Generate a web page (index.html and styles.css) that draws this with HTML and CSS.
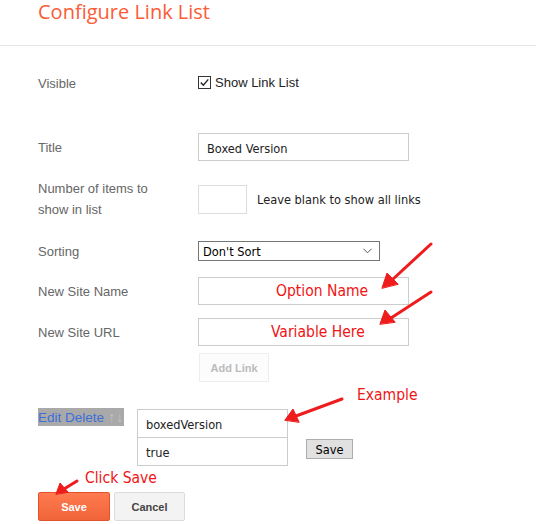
FILE: index.html
```
<!DOCTYPE html>
<html>
<head>
<meta charset="utf-8">
<link rel="stylesheet" href="styles.css">
</head>
<body>
<div class="page">
  <header class="head"><h2 class="title">Configure Link List</h2></header>
  <div class="form">
    <div class="row r-visible">
      <div class="label">Visible</div>
      <div class="field">
        <span class="check"><svg width="13" height="13" viewBox="0 0 13 13"><rect x="0.5" y="0.5" width="12" height="12" fill="#fff" stroke="#333"/><path d="M2.8 6.6 L5.3 9.2 L10.3 3.4" fill="none" stroke="#222" stroke-width="1.4"/></svg></span>
        <span class="check-label">Show Link List</span>
      </div>
    </div>
    <div class="row r-title">
      <div class="label">Title</div>
      <div class="field"><div class="input wide">Boxed Version</div></div>
    </div>
    <div class="row r-number">
      <div class="label">Number of items to<br>show in list</div>
      <div class="field"><div class="input small"></div><span class="hint">Leave blank to show all links</span></div>
    </div>
    <div class="row r-sort">
      <div class="label">Sorting</div>
      <div class="field"><div class="select"><span>Don't Sort</span><svg width="9" height="6" viewBox="0 0 9 6"><path d="M0.5 0.8 L4.5 4.8 L8.5 0.8" fill="none" stroke="#555" stroke-width="1"/></svg></div></div>
    </div>
    <div class="row r-name">
      <div class="label">New Site Name</div>
      <div class="field"><div class="input wide note-box"><span class="note note-name">Option Name</span></div></div>
    </div>
    <div class="row r-url">
      <div class="label">New Site URL</div>
      <div class="field"><div class="input wide note-box"><span class="note note-url">Variable Here</span></div></div>
    </div>
    <div class="row r-add">
      <div class="label"></div>
      <div class="field"><div class="btn-add">Add Link</div></div>
    </div>
    <div class="r-edit">
      <div class="links"><span class="lnk">Edit</span> <span class="lnk">Delete</span> <span class="arr">↑</span><span class="arr">↓</span></div>
      <div class="pair">
        <div class="input pin">boxedVersion</div>
        <div class="input pin pin2">true</div>
      </div>
      <div class="btn-small">Save</div>
    </div>
    <div class="r-buttons">
      <div class="btn-save">Save</div>
      <div class="btn-cancel">Cancel</div>
    </div>
  </div>
  <span class="note note-example">Example</span>
  <span class="note note-click">Click Save</span>
  <svg class="arrows" width="536" height="524" viewBox="0 0 536 524">
    <g stroke="#ee1c1c" stroke-width="3" stroke-linecap="round" fill="#ee1c1c">
      <line x1="431" y1="244" x2="392" y2="280"/>
      <polygon points="382,288 387,273 398,284" stroke-width="1"/>
      <line x1="431" y1="292" x2="391" y2="318"/>
      <polygon points="380,324 385,310 395,322" stroke-width="1"/>
      <line x1="342" y1="399" x2="296" y2="416"/>
      <polygon points="285,420 293,409 299,422" stroke-width="1"/>
      <line x1="77" y1="481" x2="64" y2="489"/>
      <polygon points="56,494 60,483 68,492" stroke-width="1"/>
    </g>
  </svg>
</div>
</body>
</html>
```
FILE: styles.css
```
html, body { margin: 0; padding: 0; background: #fff; }
.page { position: relative; width: 536px; height: 524px; overflow: hidden; font-family: "Liberation Sans", Arial, sans-serif; }
.head { box-sizing: border-box; height: 46px; border-bottom: 1px solid #e5e5e5; padding-top: 1px; }
.title { margin: 0; padding: 0 0 0 38px; font-family: "Open Sans", sans-serif; font-weight: 400; font-size: 20px; line-height: 22px; color: #fc5b37; }
.form { padding-left: 38px; }
.row { display: flex; align-items: center; }
.label { width: 160px; flex: none; font-size: 13px; line-height: 21px; color: #666; }
.field { display: flex; align-items: center; }
.r-visible { margin-top: 23px; height: 28px; }
.r-visible .field { position: relative; top: -1px; }
.check { display: inline-flex; width: 13px; height: 13px; margin-right: 4px; }
.check-label { font-size: 13px; color: #222; }
.r-title { margin-top: 36px; height: 28px; }
.r-number { margin-top: 17px; height: 42px; }
.r-sort { margin-top: 21px; height: 20px; }
.r-name { margin-top: 16px; height: 28px; }
.r-url { margin-top: 13px; height: 28px; }
.r-add { margin-top: 7px; height: 29px; }
.input { box-sizing: border-box; border: 1px solid #ccc; background: #fff; font-family: "DejaVu Sans Condensed", "DejaVu Sans", sans-serif; font-size: 12.7px; color: #222; display: flex; align-items: center; padding-left: 8px; padding-top: 2px; }
.wide { width: 211px; height: 28px; }
.small { width: 49px; height: 29px; border-color: #ddd; }
.hint { margin-left: 10px; font-family: "DejaVu Sans Condensed", "DejaVu Sans", sans-serif; font-size: 12.7px; color: #222; }
.select { box-sizing: border-box; width: 182px; height: 20px; border: 1px solid #767676; display: flex; align-items: center; justify-content: space-between; padding: 0 7px 0 4px; font-family: "DejaVu Sans Condensed", "DejaVu Sans", sans-serif; font-size: 12.7px; color: #000; }
.note-box { position: relative; }
.note { position: absolute; font-family: "DejaVu Sans Condensed", "DejaVu Sans", sans-serif; font-size: 15.5px; color: #f01414; white-space: nowrap; line-height: 18px; }
.note-name { left: 77px; top: 4px; }
.note-url { left: 72px; top: 4px; }
.note-example { left: 357px; top: 386px; }
.note-click { left: 85px; top: 469px; }
.btn-add { box-sizing: border-box; margin-left: 1px; width: 70px; height: 29px; border: 1px solid #eee; background: #fcfcfc; color: #bbb; font-weight: bold; font-size: 11px; display: flex; align-items: center; justify-content: center; }
.r-edit { margin-top: 27px; display: flex; align-items: flex-start; height: 57px; }
.links { margin-top: -1px; width: 86px; height: 18px; background: #a9a9a9; font-size: 13.5px; line-height: 18px; white-space: nowrap; }
.lnk { color: #3d6fd8; }
.arr { display: inline-block; width: 8px; text-align: center; color: #c4c4c4; font-size: 14px; }
.pair { margin-left: 13px; display: flex; flex-direction: column; }
.pin { width: 151px; height: 29px; }
.pin2 { margin-top: -1px; height: 29px; }
.btn-small { box-sizing: border-box; margin-left: 18px; margin-top: 30px; width: 47px; height: 20px; border: 1px solid #adadad; background: #e1e1e1; font-family: "DejaVu Sans Condensed", "DejaVu Sans", sans-serif; font-size: 12.7px; color: #000; display: flex; align-items: center; justify-content: center; }
.r-buttons { margin-top: 26px; display: flex; gap: 4px; }
.btn-save, .btn-cancel { box-sizing: border-box; width: 72px; height: 29px; font-size: 11px; font-weight: bold; display: flex; align-items: center; justify-content: center; border-radius: 2px; }
.btn-save { background: linear-gradient(#ff7b4f, #f0643a); border: 1px solid #e2532b; color: #fff; }
.btn-cancel { width: 71px; background: #f3f3f3; border: 1px solid #dcdcdc; color: #444; }
.arrows { position: absolute; left: 0; top: 0; pointer-events: none; }
```
